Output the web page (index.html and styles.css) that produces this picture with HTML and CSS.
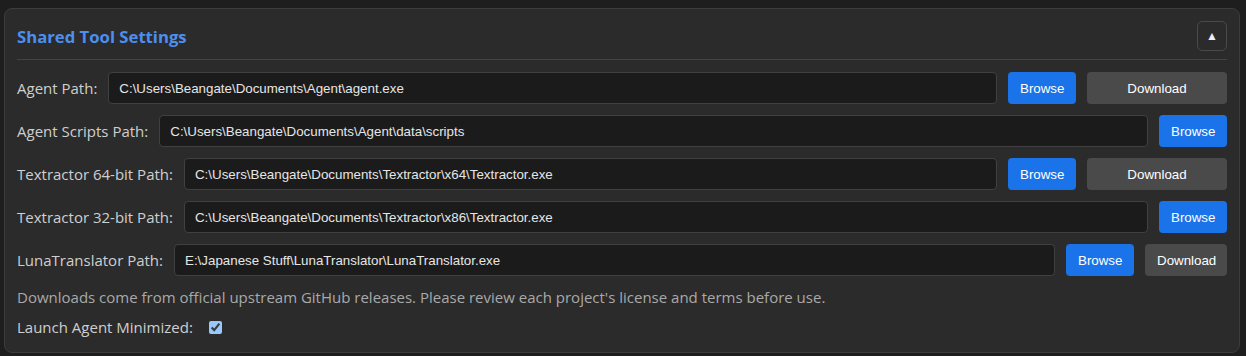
FILE: index.html
```html
<!DOCTYPE html>
<html lang="en">
<head>
    <meta charset="UTF-8">
    <meta name="viewport" content="width=device-width, initial-scale=1.0">
    <title>Shared Tool Settings</title>
    <link rel="stylesheet" href="styles.css">
</head>
<body>
    <section class="settings-panel">
        <div class="panel-header">
            <h2 class="panel-title">Shared Tool Settings</h2>
            <button class="collapse-btn" type="button">&#9650;</button>
        </div>

        <div class="path-row">
            <label class="path-label">Agent Path:</label>
            <input class="path-input" type="text" value="C:\Users\Beangate\Documents\Agent\agent.exe">
            <button class="btn btn-browse" type="button">Browse</button>
            <button class="btn btn-download wide" type="button">Download</button>
        </div>

        <div class="path-row">
            <label class="path-label">Agent Scripts Path:</label>
            <input class="path-input" type="text" value="C:\Users\Beangate\Documents\Agent\data\scripts">
            <button class="btn btn-browse" type="button">Browse</button>
        </div>

        <div class="path-row">
            <label class="path-label">Textractor 64-bit Path:</label>
            <input class="path-input" type="text" value="C:\Users\Beangate\Documents\Textractor\x64\Textractor.exe">
            <button class="btn btn-browse" type="button">Browse</button>
            <button class="btn btn-download wide" type="button">Download</button>
        </div>

        <div class="path-row">
            <label class="path-label">Textractor 32-bit Path:</label>
            <input class="path-input" type="text" value="C:\Users\Beangate\Documents\Textractor\x86\Textractor.exe">
            <button class="btn btn-browse" type="button">Browse</button>
        </div>

        <div class="path-row">
            <label class="path-label">LunaTranslator Path:</label>
            <input class="path-input" type="text" value="E:\Japanese Stuff\LunaTranslator\LunaTranslator.exe">
            <button class="btn btn-browse" type="button">Browse</button>
            <button class="btn btn-download" type="button">Download</button>
        </div>

        <p class="help-text">Downloads come from official upstream GitHub releases. Please review each project's license and terms before use.</p>

        <div class="check-row">
            <label class="path-label" for="minimized">Launch Agent Minimized:</label>
            <input id="minimized" class="check" type="checkbox" checked>
        </div>
    </section>
</body>
</html>
```

FILE: styles.css
```css
/* General */
html, body {
    margin: 0;
    padding: 0;
    background-color: #1e1e1e;
    color-scheme: dark;
}

body {
    padding: 8px 6px 4px 4px;
    font-family: "Open Sans", "Noto Sans", sans-serif;
}

/* Panel */
.settings-panel {
    background-color: #2b2b2b;
    border: 1px solid #3c3c3c;
    border-radius: 8px;
    padding: 12px 12px 15px 12px;
}

.panel-header {
    display: flex;
    justify-content: space-between;
    align-items: center;
    padding-bottom: 8px;
    border-bottom: 1px solid #444;
    margin-bottom: 12px;
}

.panel-title {
    margin: 0;
    font-size: 16.7px;
    font-weight: bold;
    color: #4c8ff0;
}

.collapse-btn {
    width: 30px;
    height: 30px;
    background-color: #2b2b2b;
    border: 1px solid #4a4a4a;
    border-radius: 5px;
    color: #e8f0ff;
    font-size: 12px;
    padding: 0;
    cursor: pointer;
}

/* Path rows */
.path-row {
    display: flex;
    align-items: center;
    gap: 11px;
    height: 32px;
    margin-bottom: 11px;
}

.path-label {
    font-size: 15px;
    color: #cfcfcf;
    white-space: nowrap;
}

.path-input {
    flex-grow: 1;
    height: 32px;
    box-sizing: border-box;
    background-color: #1b1b1b;
    border: 1px solid #404040;
    border-radius: 4px;
    padding: 0 10px;
    color: #e6e6e6;
    font-family: "Liberation Sans", Arial, sans-serif;
    font-size: 13.33px;
    outline: none;
}

.btn {
    height: 32px;
    border: none;
    border-radius: 4px;
    padding: 0 12px;
    color: #ffffff;
    font-family: "Liberation Sans", Arial, sans-serif;
    font-size: 13.33px;
    cursor: pointer;
}

.btn-browse {
    background-color: #1a73e8;
    width: 68px;
}

.btn-download {
    background-color: #4a4a4a;
    width: 82px;
}

.btn-download.wide {
    width: 140px;
}

/* Footer */
.help-text {
    margin: 11px 0 10px 0;
    font-size: 15px;
    color: #a9a9a9;
}

.check-row {
    display: flex;
    align-items: center;
    gap: 16px;
    height: 20px;
}

.check {
    margin: 0;
    width: 13px;
    height: 13px;
    accent-color: #99c8ff;
}
```
